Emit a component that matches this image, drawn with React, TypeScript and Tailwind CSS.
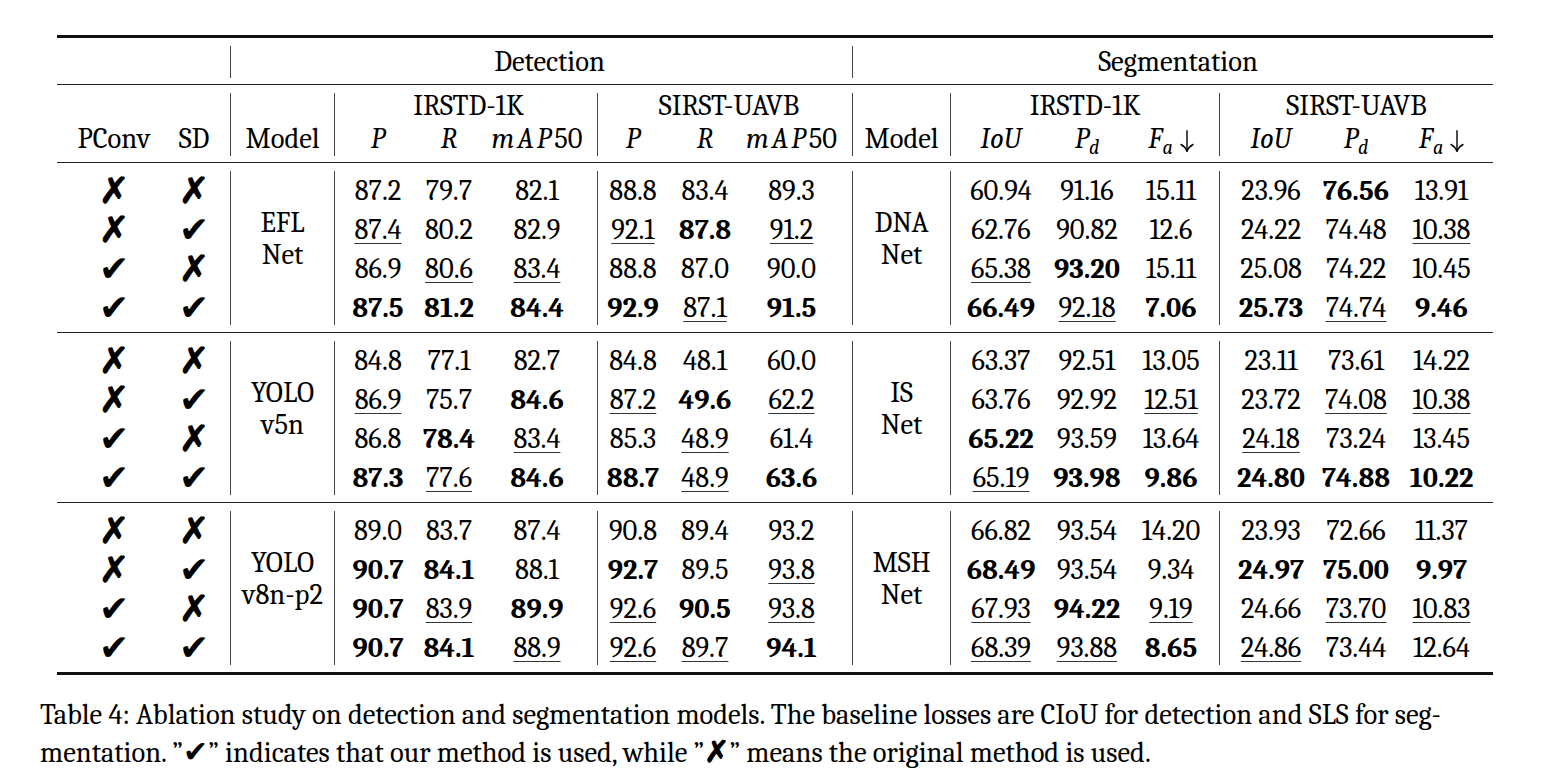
import React from "react";

type Row = { pc: boolean; sd: boolean; vals: string[] };
type Group = { det: string[]; seg: string[]; rows: Row[] };

const W = [
  "w-[86px]",
  "w-[56px]",
  "w-[120px]",
  "w-[70px]",
  "w-[74px]",
  "w-[99px]",
  "w-[100px]",
  "w-[72px]",
  "w-[96px]",
  "w-[102px]",
  "w-[68px]",
  "w-[103px]",
];

const groups: Group[] = [
  {
    det: ["EFL", "Net"],
    seg: ["DNA", "Net"],
    rows: [
      { pc: false, sd: false, vals: ["87.2", "79.7", "82.1", "88.8", "83.4", "89.3", "60.94", "91.16", "15.11", "23.96", "*76.56", "13.91"] },
      { pc: false, sd: true, vals: ["_87.4", "80.2", "82.9", "_92.1", "*87.8", "_91.2", "62.76", "90.82", "12.6", "24.22", "74.48", "_10.38"] },
      { pc: true, sd: false, vals: ["86.9", "_80.6", "_83.4", "88.8", "87.0", "90.0", "_65.38", "*93.20", "15.11", "25.08", "74.22", "10.45"] },
      { pc: true, sd: true, vals: ["*87.5", "*81.2", "*84.4", "*92.9", "_87.1", "*91.5", "*66.49", "_92.18", "*7.06", "*25.73", "_74.74", "*9.46"] },
    ],
  },
  {
    det: ["YOLO", "v5n"],
    seg: ["IS", "Net"],
    rows: [
      { pc: false, sd: false, vals: ["84.8", "77.1", "82.7", "84.8", "48.1", "60.0", "63.37", "92.51", "13.05", "23.11", "73.61", "14.22"] },
      { pc: false, sd: true, vals: ["_86.9", "75.7", "*84.6", "_87.2", "*49.6", "_62.2", "63.76", "92.92", "_12.51", "23.72", "_74.08", "_10.38"] },
      { pc: true, sd: false, vals: ["86.8", "*78.4", "_83.4", "85.3", "_48.9", "61.4", "*65.22", "93.59", "13.64", "_24.18", "73.24", "13.45"] },
      { pc: true, sd: true, vals: ["*87.3", "_77.6", "*84.6", "*88.7", "_48.9", "*63.6", "_65.19", "*93.98", "*9.86", "*24.80", "*74.88", "*10.22"] },
    ],
  },
  {
    det: ["YOLO", "v8n-p2"],
    seg: ["MSH", "Net"],
    rows: [
      { pc: false, sd: false, vals: ["89.0", "83.7", "87.4", "90.8", "89.4", "93.2", "66.82", "93.54", "14.20", "23.93", "72.66", "11.37"] },
      { pc: false, sd: true, vals: ["*90.7", "*84.1", "88.1", "*92.7", "89.5", "_93.8", "*68.49", "93.54", "9.34", "*24.97", "*75.00", "*9.97"] },
      { pc: true, sd: false, vals: ["*90.7", "_83.9", "*89.9", "_92.6", "*90.5", "_93.8", "_67.93", "*94.22", "_9.19", "24.66", "_73.70", "_10.83"] },
      { pc: true, sd: true, vals: ["*90.7", "*84.1", "_88.9", "_92.6", "_89.7", "*94.1", "_68.39", "_93.88", "*8.65", "_24.86", "73.44", "12.64"] },
    ],
  },
];

function Num({ s }: { s: string }) {
  if (s.startsWith("*")) return <span className="font-bold">{s.slice(1)}</span>;
  if (s.startsWith("_"))
    return (
      <span className="underline decoration-1 underline-offset-4 decoration-[#333]">{s.slice(1)}</span>
    );
  return <span>{s}</span>;
}

function Mark({ ok }: { ok: boolean }) {
  return ok ? (
    <span className="[font-family:DejaVu_Sans,sans-serif] text-[36px]">{"\u2714"}</span>
  ) : (
    <span className="[font-family:DejaVu_Sans,sans-serif] text-[36px] [-webkit-text-stroke:1px_black]">{"\u2717"}</span>
  );
}

const HLine = () => <div className="w-px mt-[8px] mb-[6px] bg-[#444]" />;
const DLine = () => <div className="w-px mt-[8px] mb-[7px] bg-[#444]" />;
const Rule = () => <div className="h-px bg-[#222]" />;
const ThickRule = () => <div className="h-[3px] bg-[#111]" />;

function DataCol({ i, rows }: { i: number; rows: Row[] }) {
  return (
    <div className={`${W[i]} pt-[8px] flex flex-col`}>
      {rows.map((r, k) => (
        <div key={k} className="h-[39px] leading-[39px] text-center whitespace-nowrap">
          <Num s={r.vals[i]} />
        </div>
      ))}
    </div>
  );
}

function MarkCol({ w, rows, which }: { w: string; rows: Row[]; which: "pc" | "sd" }) {
  return (
    <div className={`${w} pt-[8px] flex flex-col`}>
      {rows.map((r, k) => (
        <div key={k} className="h-[39px] leading-[39px] text-center">
          <Mark ok={r[which]} />
        </div>
      ))}
    </div>
  );
}

function GroupBand({ g }: { g: Group }) {
  return (
    <div className="flex h-[169px]">
      <MarkCol w="w-[114px]" rows={g.rows} which="pc" />
      <MarkCol w="w-[46px]" rows={g.rows} which="sd" />
      <div className="w-[13px]" />
      <DLine />
      <div className="w-[103px] pt-[44px] text-center leading-[31.5px]">
        {g.det[0]}
        <br />
        {g.det[1]}
      </div>
      <DLine />
      {[0, 1, 2].map((i) => (
        <DataCol key={i} i={i} rows={g.rows} />
      ))}
      <DLine />
      {[3, 4, 5].map((i) => (
        <DataCol key={i} i={i} rows={g.rows} />
      ))}
      <div className="w-[11px]" />
      <DLine />
      <div className="w-[97px] pt-[44px] text-center leading-[31.5px]">
        {g.seg[0]}
        <br />
        {g.seg[1]}
      </div>
      <DLine />
      {[6, 7, 8].map((i) => (
        <DataCol key={i} i={i} rows={g.rows} />
      ))}
      <DLine />
      {[9, 10, 11].map((i) => (
        <DataCol key={i} i={i} rows={g.rows} />
      ))}
    </div>
  );
}

const Sub = ({ c }: { c: string }) => (
  <sub className="italic text-[20px] bottom-[-6px]">{c}</sub>
);

const MAP = () => (
  <span>
    <span className="italic tracking-[3px]">mAP</span>
    <span>50</span>
  </span>
);

const Arrow = () => (
  <svg
    className="inline-block ml-[7px] align-[-4px]"
    width="14"
    height="22"
    viewBox="0 0 14 22"
    fill="none"
    stroke="black"
    strokeWidth="1.4"
    strokeLinecap="round"
  >
    <path d="M7 0.8 V21" />
    <path d="M1 14.5 Q5 16.5 7 21.2 Q9 16.5 13 14.5" />
  </svg>
);

function Hd({ w, children }: { w: string; children: React.ReactNode }) {
  return <div className={`${w} h-[33px] leading-[33px] text-center whitespace-nowrap`}>{children}</div>;
}

export default function App() {
  return (
    <div className="min-h-screen bg-white text-black font-serif [font-family:Liberation_Serif,Times_New_Roman,serif] text-[28.5px]">
      <div className="pt-[35px] pl-[57px] w-[1493px]">
        <ThickRule />
        {/* header row 1 */}
        <div className="flex h-[46px]">
          <div className="w-[173px]" />
          <HLine />
          <div className="w-[621px] pt-[8px] pl-[16px] leading-[32px] text-center">Detection</div>
          <HLine />
          <div className="w-[640px] pt-[8px] pl-[10px] leading-[32px] text-center">Segmentation</div>
        </div>
        <Rule />
        {/* header row 2 */}
        <div className="flex h-[77px]">
          <div className="w-[114px] pt-[37px] leading-[33px] text-center">PConv</div>
          <div className="w-[46px] pt-[37px] leading-[33px] text-center">SD</div>
          <div className="w-[13px]" />
          <HLine />
          <div className="w-[103px] pt-[37px] leading-[33px] text-center">Model</div>
          <HLine />
          <div className="w-[262px] pt-[4px] flex flex-col">
            <div className="h-[33px] leading-[33px] text-center pl-[5px]">IRSTD-1K</div>
            <div className="flex">
              <Hd w={W[0]}>
                <i>P</i>
              </Hd>
              <Hd w={W[1]}>
                <i>R</i>
              </Hd>
              <Hd w={W[2]}>
                <MAP />
              </Hd>
            </div>
          </div>
          <HLine />
          <div className="w-[254px] pt-[4px] flex flex-col">
            <div className="h-[33px] leading-[33px] text-center pl-[8px]">SIRST-UAVB</div>
            <div className="flex">
              <Hd w={W[3]}>
                <i>P</i>
              </Hd>
              <Hd w={W[4]}>
                <i>R</i>
              </Hd>
              <Hd w={W[5]}>
                <MAP />
              </Hd>
            </div>
          </div>
          <HLine />
          <div className="w-[97px] pt-[37px] leading-[33px] text-center">Model</div>
          <HLine />
          <div className="w-[268px] pt-[4px] flex flex-col">
            <div className="h-[33px] leading-[33px] text-center">IRSTD-1K</div>
            <div className="flex">
              <Hd w={W[6]}>
                <i>IoU</i>
              </Hd>
              <Hd w={W[7]}>
                <i>P</i>
                <Sub c="d" />
              </Hd>
              <Hd w={W[8]}>
                <i>F</i>
                <Sub c="a" />
                <Arrow />
              </Hd>
            </div>
          </div>
          <HLine />
          <div className="w-[273px] pt-[4px] flex flex-col">
            <div className="h-[33px] leading-[33px] text-center">SIRST-UAVB</div>
            <div className="flex">
              <Hd w={W[9]}>
                <i>IoU</i>
              </Hd>
              <Hd w={W[10]}>
                <i>P</i>
                <Sub c="d" />
              </Hd>
              <Hd w={W[11]}>
                <i>F</i>
                <Sub c="a" />
                <Arrow />
              </Hd>
            </div>
          </div>
        </div>
        <Rule />
        <GroupBand g={groups[0]} />
        <Rule />
        <GroupBand g={groups[1]} />
        <Rule />
        <GroupBand g={groups[2]} />
        <ThickRule />
      </div>
      <div className="pl-[40px] pt-[21px] leading-[37px]">
        <div className="whitespace-nowrap">
          Table 4: Ablation study on detection and segmentation models. The baseline losses are CIoU for detection
          and SLS for seg-
        </div>
        <div className="whitespace-nowrap">
          mentation. ”<span className="[font-family:DejaVu_Sans,sans-serif] text-[30px]">{"\u2714"}</span>” indicates
          that our method is used, while ”
          <span className="[font-family:DejaVu_Sans,sans-serif] text-[30px] [-webkit-text-stroke:1px_black]">
            {"\u2717"}
          </span>
          ” means the original method is used.
        </div>
      </div>
    </div>
  );
}
